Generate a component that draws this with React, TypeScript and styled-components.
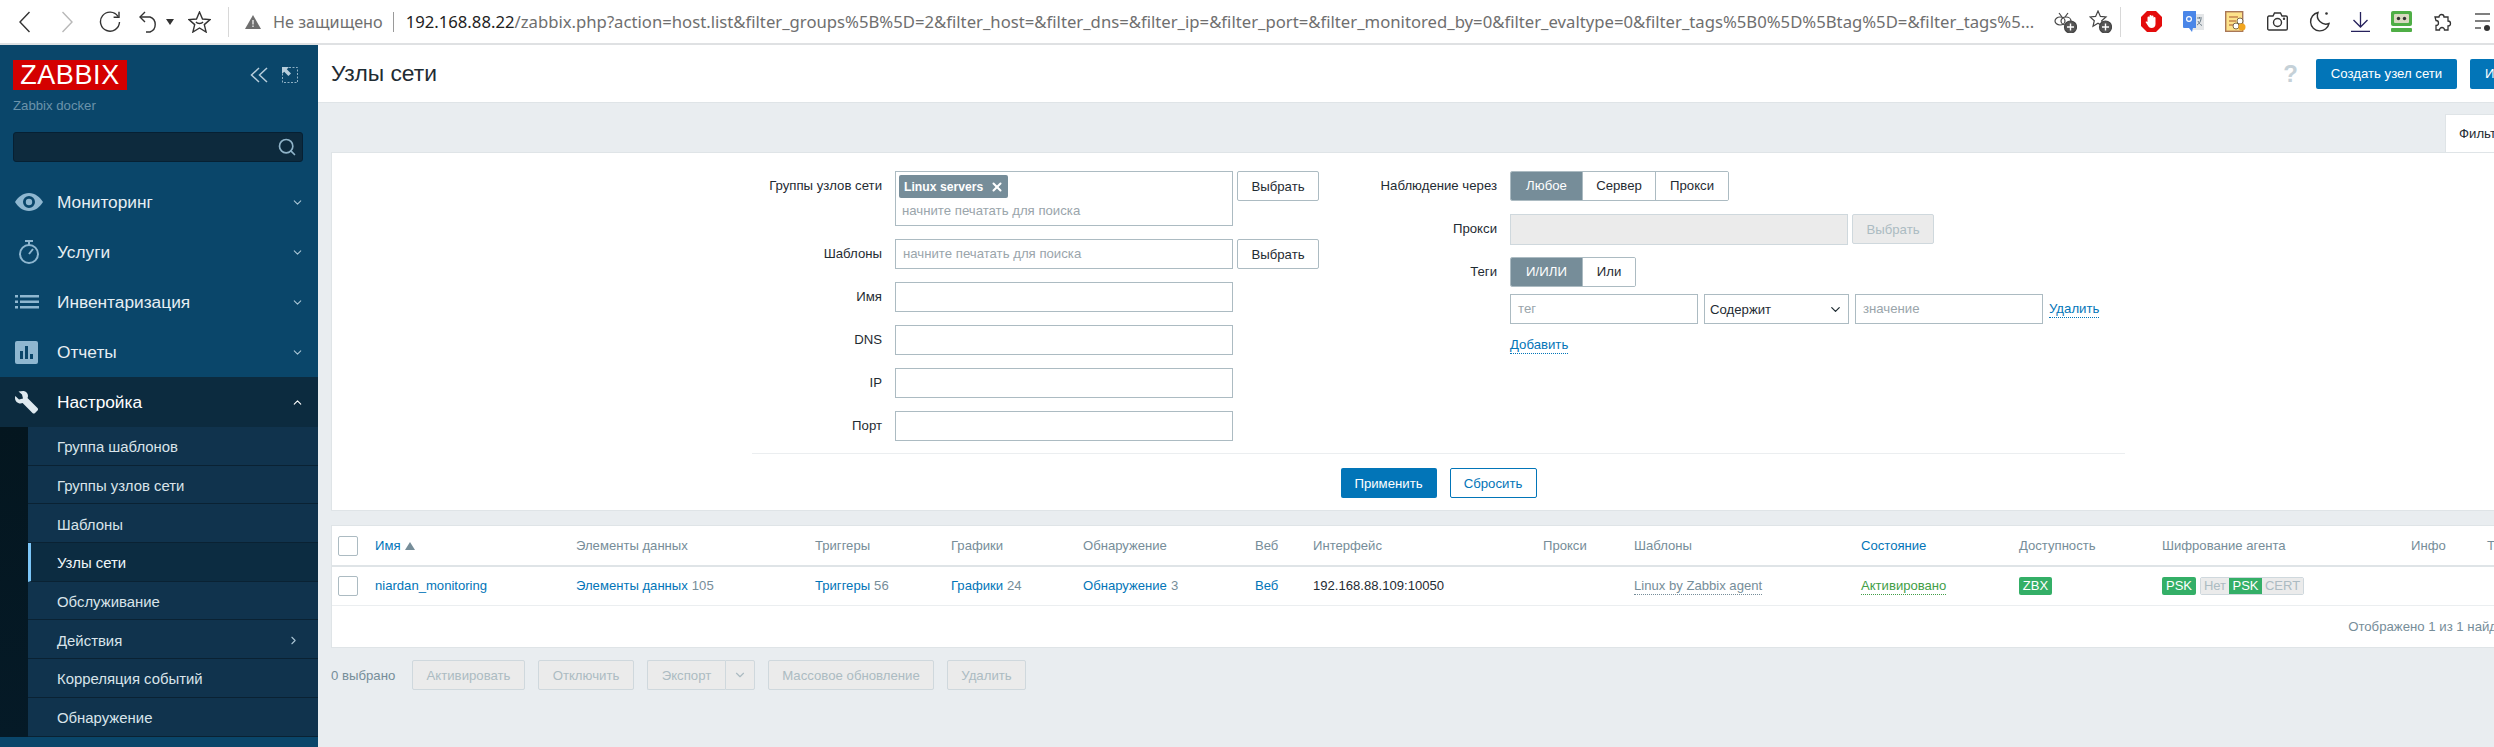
import React from 'react';
import styled, { createGlobalStyle } from 'styled-components';
import { ChevronDown, ChevronUp, ChevronRight, Search, X } from 'lucide-react';

const GlobalStyle = createGlobalStyle`
  html, body {
    margin: 0;
    padding: 0;
    height: 100%;
    overflow: hidden;
    background: #e9edf0;
  }
  * { box-sizing: border-box; }
  body {
    font-family: "Liberation Sans", Arial, sans-serif;
    font-size: 13.2px;
    color: #1f2c33;
  }
`;

const Page = styled.div`
  width: 2494px;
  height: 747px;
  overflow: hidden;
  display: flex;
  flex-direction: column;
`;

/* browser chrome */
const BrowserBar = styled.div`
  height: 45px;
  flex: none;
  display: flex;
  align-items: center;
  background: #fff;
  border-bottom: 2px solid #dfe1e3;
  padding-left: 19px;
`;

const ToolGroup = styled.div<{ $gap: number; $left?: number }>`
  display: flex;
  align-items: center;
  gap: ${p => p.$gap}px;
  flex: none;
  margin-left: ${p => p.$left ?? 0}px;
`;

const ToolSep = styled.div<{ $left: number; $right: number }>`
  width: 1px;
  height: 30px;
  background: #d8d8d8;
  flex: none;
  margin: 0 ${p => p.$right}px 0 ${p => p.$left}px;
`;

const Secure = styled.span`
  font-family: "Noto Sans", sans-serif;
  font-size: 16.2px;
  color: #6f6f6f;
  margin-left: 12px;
  white-space: nowrap;
`;

const PipeSep = styled.span`
  width: 1px;
  height: 20px;
  margin: 0 12px 0 10px;
  background: #9a9a9a;
  flex: none;
`;

const Address = styled.div`
  flex: none;
  width: 1634px;
  font-family: "Noto Sans", sans-serif;
  font-size: 16.7px;
  color: #6f6f6f;
  white-space: nowrap;
  overflow: hidden;
  b { font-weight: 400; color: #222; }
`;

const Body = styled.div`
  flex: 1;
  display: flex;
  min-height: 0;
`;

/* sidebar */
const Sidebar = styled.aside`
  width: 318px;
  flex: none;
  background: #0a466a;
  display: flex;
  flex-direction: column;
  padding-top: 15px;
`;

const BrandRow = styled.div`
  display: flex;
  align-items: flex-start;
  justify-content: space-between;
  padding: 0 20px 0 13px;
`;

const Logo = styled.div`
  width: 114px;
  height: 30px;
  background: #d40000;
  color: #fff;
  font-size: 27px;
  line-height: 30px;
  text-align: center;
  letter-spacing: 0.6px;
`;

const BrandTools = styled.div`
  display: flex;
  gap: 14px;
  padding-top: 7px;
`;

const ServerName = styled.div`
  margin: 7px 13px 17px;
  font-size: 13.2px;
  line-height: 18px;
  color: #6b93ab;
`;

const SearchBox = styled.div`
  margin: 0 15px 15px 13px;
  height: 30px;
  background: #0d2a3d;
  border: 1px solid #062033;
  border-radius: 3px;
  display: flex;
  align-items: center;
  justify-content: flex-end;
  padding-right: 5px;
  color: #8fb3c8;
`;

const MenuItem = styled.div<{ $open?: boolean }>`
  height: 50px;
  display: flex;
  align-items: center;
  padding-left: 15px;
  padding-right: 14px;
  background: ${p => (p.$open ? '#0c2b3f' : 'transparent')};
  color: ${p => (p.$open ? '#fff' : '#e6eef3')};
  font-size: 17.3px;
`;

const MenuIcon = styled.span`
  width: 42px;
  flex: none;
  display: flex;
  align-items: center;
`;

const MenuLabel = styled.span`
  flex: 1;
`;

const Arrow = styled.span`
  display: flex;
  color: #a9c4d4;
`;

const SubMenu = styled.div`
  padding-left: 28px;
  background: linear-gradient(#04161f, #051a27);
`;

const SubItem = styled.div<{ $active?: boolean }>`
  height: 38.7px;
  display: flex;
  align-items: center;
  justify-content: space-between;
  padding-left: ${p => (p.$active ? '26px' : '29px')};
  padding-right: 18px;
  padding-top: 3px;
  background: ${p => (p.$active ? '#0c2c41' : '#10334d')};
  border-left: ${p => (p.$active ? '3px solid #7cc6f8' : '0')};
  border-bottom: 1px solid #0a2233;
  color: ${p => (p.$active ? '#f1f6f9' : '#d9e4ea')};
  font-size: 14.9px;
`;

/* main */
const Main = styled.main`
  width: 2241px;
  flex: none;
  display: flex;
  flex-direction: column;
`;

const Header = styled.header`
  height: 58px;
  flex: none;
  background: #fff;
  border-bottom: 1px solid #dfe4e7;
  display: flex;
  align-items: center;
  padding: 0 0 0 13px;
`;

const Title = styled.h1`
  flex: 1;
  margin: 0;
  font-size: 22.8px;
  font-weight: 400;
  color: #1f2c33;
`;

const Help = styled.span`
  font-size: 24px;
  font-weight: 700;
  color: #c5d1d8;
  margin-right: 18px;
`;

const PrimaryButton = styled.button<{ $w: number }>`
  width: ${p => p.$w}px;
  height: 30px;
  border: 0;
  border-radius: 2px;
  background: #0275b8;
  color: #fff;
  font: inherit;
  white-space: nowrap;
  padding: 0;
`;

const HeaderButtons = styled.div`
  display: flex;
  gap: 13px;
  padding-right: 13px;
`;

const Content = styled.div`
  padding: 11px 13px 0;
`;

const Tabs = styled.div`
  display: flex;
  justify-content: flex-end;
`;

const Tab = styled.div`
  width: 101px;
  height: 38px;
  background: #fff;
  border: 1px solid #dfe4e7;
  border-bottom: 0;
  padding: 11px 0 0 13px;
  color: #1f2c33;
`;

const FilterPanel = styled.section`
  background: #fff;
  border: 1px solid #dfe4e7;
  height: 359px;
  padding-top: 18px;
`;

const FilterForm = styled.div`
  width: 1373px;
  margin: 0 auto;
`;

const FormColumns = styled.div`
  display: flex;
  height: 283px;
  border-bottom: 1px solid #ebeef0;
`;

const FormColumn = styled.div<{ $label: number; $w: number }>`
  width: ${p => p.$w}px;
  flex: none;
  display: grid;
  grid-template-columns: ${p => p.$label}px 1fr;
  column-gap: 13px;
  align-content: start;
`;

const FieldLabel = styled.label`
  text-align: right;
  line-height: 30px;
  white-space: nowrap;
  color: #1f2c33;
`;

const FieldRow = styled.div<{ $mb: number }>`
  display: flex;
  gap: 4px;
  align-items: flex-start;
  margin-bottom: ${p => p.$mb}px;
`;

const TextInput = styled.div<{ $w?: number; $disabled?: boolean }>`
  width: ${p => p.$w ?? 338}px;
  height: ${p => (p.$disabled ? 31 : 30)}px;
  flex: none;
  border: 1px solid ${p => (p.$disabled ? '#cfd8dd' : '#acbbc2')};
  background: ${p => (p.$disabled ? '#ebebeb' : '#fff')};
  padding-left: 7px;
  line-height: 28px;
  color: #9aa5ab;
  white-space: nowrap;
`;

const MultiSelect = styled.div`
  width: 338px;
  height: 55px;
  flex: none;
  border: 1px solid #acbbc2;
  padding: 3px 3px 0;
  color: #9aa5ab;
  line-height: 22px;
`;

const MultiHint = styled.div`
  padding: 2px 0 0 3px;
`;

const Chip = styled.span`
  display: inline-flex;
  align-items: center;
  height: 23px;
  gap: 7px;
  padding: 0 4px 0 5px;
  background: #768d99;
  border-radius: 2px;
  color: #fff;
  font-size: 12.2px;
  font-weight: 700;
`;

const GhostButton = styled.button<{ $w?: number }>`
  width: ${p => p.$w ?? 82}px;
  height: 30px;
  flex: none;
  background: #fff;
  border: 1px solid #acbbc2;
  border-radius: 2px;
  color: #1f2c33;
  font: inherit;
  padding: 0;
`;

const DisabledButton = styled.button<{ $w: number }>`
  width: ${p => p.$w}px;
  height: 30px;
  flex: none;
  background: #ebebeb;
  border: 1px solid #cfd8dd;
  border-radius: 2px;
  color: #acbbc2;
  font: inherit;
  padding: 0;
`;

const Segmented = styled.div`
  display: inline-flex;
  height: 30px;
  border: 1px solid #acbbc2;
  border-radius: 2px;
  overflow: hidden;
`;

const Segment = styled.div<{ $w: number; $on?: boolean }>`
  width: ${p => p.$w}px;
  line-height: 28px;
  text-align: center;
  background: ${p => (p.$on ? '#768d99' : '#fff')};
  color: ${p => (p.$on ? '#fff' : '#1f2c33')};
  & + & { border-left: 1px solid #acbbc2; }
`;

const TagRow = styled.div`
  display: flex;
  align-items: center;
  gap: 6px;
  margin-bottom: 12px;
`;

const SelectBox = styled.div`
  width: 145px;
  height: 30px;
  flex: none;
  border: 1px solid #acbbc2;
  display: flex;
  align-items: center;
  justify-content: space-between;
  padding: 0 5px;
  color: #1f2c33;
`;

const DottedLink = styled.span<{ $color?: string }>`
  display: inline-block;
  color: ${p => p.$color ?? '#0275b8'};
  border-bottom: 1px dotted ${p => p.$color ?? '#0275b8'};
  line-height: 17px;
  white-space: nowrap;
`;

const FormActions = styled.div`
  display: flex;
  justify-content: center;
  gap: 13px;
  padding-top: 14px;
`;

const ResetButton = styled(GhostButton)`
  border-color: #0275b8;
  color: #0275b8;
`;

const ListPanel = styled.section`
  margin-top: 14px;
  background: #fff;
  border: 1px solid #dfe4e7;
  height: 123px;
`;

const Table = styled.table`
  width: 100%;
  table-layout: fixed;
  border-collapse: collapse;
  white-space: nowrap;
  font-size: 13.1px;
`;

const Th = styled.th<{ $link?: boolean }>`
  height: 40px;
  padding: 0;
  text-align: left;
  font-weight: 400;
  color: ${p => (p.$link ? '#0275b8' : '#768d99')};
  border-bottom: 2px solid #dfe4e7;
`;

const Td = styled.td`
  height: 39px;
  padding: 0;
  border-bottom: 1px solid #ebeef0;
`;

const Check = styled.span`
  display: block;
  width: 20px;
  height: 20px;
  margin-left: 6px;
  border: 1px solid #acbbc2;
  border-radius: 2px;
`;

const SortMark = styled.span`
  display: inline-block;
  margin-left: 4px;
  border-left: 5px solid transparent;
  border-right: 5px solid transparent;
  border-bottom: 8px solid #768d99;
`;

const Link = styled.span`
  color: #0275b8;
`;

const Count = styled.span`
  color: #768d99;
  margin-left: 4px;
`;

const Badge = styled.span<{ $on?: boolean; $w: number }>`
  display: inline-block;
  width: ${p => p.$w}px;
  height: 18px;
  line-height: 18px;
  text-align: center;
  font-size: 13px;
  background: ${p => (p.$on ? '#34af67' : '#ebebeb')};
  color: ${p => (p.$on ? '#fff' : '#acbbc2')};
`;

const SoloBadge = styled(Badge)`
  border-radius: 2px;
`;

const BadgeGroup = styled.span`
  display: inline-flex;
  margin-left: 4px;
  border: 1px solid #cfd8dd;
  border-radius: 2px;
  overflow: hidden;
  vertical-align: top;
  span { height: 16px; line-height: 16px; }
`;

const Paging = styled.div`
  height: 41px;
  line-height: 41px;
  text-align: right;
  padding-right: 26px;
  color: #768d99;
`;

const ActionBar = styled.div`
  display: flex;
  align-items: center;
  gap: 13px;
  margin-top: 12px;
`;

const Selected = styled.span`
  width: 68px;
  color: #768d99;
`;

const SplitButton = styled.div`
  display: flex;
`;

const SplitLeft = styled(DisabledButton)`
  border-radius: 2px 0 0 2px;
  border-right: 0;
`;

const SplitRight = styled(DisabledButton)`
  border-radius: 0 2px 2px 0;
  display: flex;
  align-items: center;
  justify-content: center;
`;

const BackIcon = () => (
  <svg width="11" height="22" viewBox="0 0 11 22" fill="none" stroke="#333" strokeWidth="1.4"><path d="M10.5 1 1 11l9.5 10" /></svg>
);

const ForwardIcon = () => (
  <svg width="11" height="22" viewBox="0 0 11 22" fill="none" stroke="#b8b8b8" strokeWidth="1.4"><path d="M.5 1 10 11 .5 21" /></svg>
);

const ReloadIcon = () => (
  <svg width="22" height="22" viewBox="0 0 22 22" fill="none" stroke="#333" strokeWidth="1.4"><path d="M19 5.500A9.500 9.500 0 1 0 20.500 11" /><path d="M20 .8v5.400h-5.400" /></svg>
);

const UndoIcon = () => (
  <svg width="20" height="22" viewBox="0 0 20 22" fill="none" stroke="#333" strokeWidth="1.4"><path d="M6 1 1 6l5 5" /><path d="M1 6h10a8 8 0 0 1 0 15H7" /></svg>
);

const Caret = () => (
  <svg width="8" height="6" viewBox="0 0 8 6" fill="#333"><path d="M0 0h8L4 6z" /></svg>
);

const StarFace = () => (
  <svg width="23" height="22" viewBox="0 0 23 22" fill="none" stroke="#333" strokeWidth="1.4"><path d="m11.500 1 3 7 7.500.6-5.700 5 1.800 7.400-6.600-4-6.600 4 1.800-7.400-5.700-5 7.500-.6z" /><path d="M8 11c1.500 2 5.500 2 7 0" /></svg>
);

const WarnIcon = () => (
  <svg width="16" height="14" viewBox="0 0 16 14"><path d="M8 0 16 14H0z" fill="#6f6f6f" /><path d="M8 5v4.500M8 10.600v1.400" stroke="#fff" strokeWidth="1.2" /></svg>
);

const PlusDot = () => (
  <g>
    <circle cx="16.500" cy="17" r="6" fill="#555" />
    <path d="M16.500 13.500v7M13 17h7" stroke="#fff" strokeWidth="1.4" />
  </g>
);

const BugPlusIcon = () => (
  <svg width="23" height="23" viewBox="0 0 23 23" fill="none" stroke="#444" strokeWidth="1.2">
    <ellipse cx="6" cy="11" rx="5" ry="4" />
    <ellipse cx="12" cy="11" rx="5" ry="4" />
    <path d="M5 3l3 4M14 3l-3 4" />
    <PlusDot />
  </svg>
);

const StarPlusIcon = () => (
  <svg width="23" height="23" viewBox="0 0 23 23" fill="none" stroke="#444" strokeWidth="1.2">
    <path d="m9 1 2.400 5.400 5.600.5-4.300 3.800 1.300 5.600-5-3-5 3 1.300-5.600L1 6.900l5.600-.5z" />
    <PlusDot />
  </svg>
);

const AdBlockIcon = () => (
  <svg width="21" height="21" viewBox="0 0 21 21">
    <path d="M6 0h9l6 6v9l-6 6H6l-6-6V6z" fill="#e40c0c" />
    <path d="M6.500 11V6.500a1 1 0 0 1 2 0V5a1 1 0 0 1 2 0v.5a1 1 0 0 1 2 0V7a1 1 0 0 1 2 0v6c0 2.500-1.500 4-4 4-2 0-3-1-4-3l-2-3c1-.8 1.500-.5 2 0z" fill="#fff" />
  </svg>
);

const TranslateIcon = () => (
  <svg width="21" height="22" viewBox="0 0 21 22">
    <rect x="10" y="3" width="11" height="16" fill="#e4e6e8" />
    <path d="M14 7h5M16.500 6v1.500M18 8c-.5 3-2 5-4 6M15 10c.8 2 2 3.500 4 4.500" stroke="#6b7c88" fill="none" strokeWidth="1" />
    <path d="M1 0h12v17H10l-1 4-3-4H1a1 1 0 0 1-1-1V1a1 1 0 0 1 1-1z" fill="#4a86e8" />
    <circle cx="6" cy="8" r="2.400" fill="none" stroke="#fff" strokeWidth="1.200" />
  </svg>
);

const NotesIcon = () => (
  <svg width="21" height="21" viewBox="0 0 21 21" fill="none">
    <rect x=".7" y=".7" width="17" height="19.600" fill="#fde28a" stroke="#a97757" strokeWidth="1.400" />
    <path d="M4 6h9M4 10h7M4 14h5" stroke="#a9562c" strokeWidth="1.200" />
    <circle cx="15" cy="10" r="3" fill="#fff" stroke="#7a6a4a" />
    <circle cx="11" cy="15" r="3" fill="#fff" stroke="#7a6a4a" />
    <circle cx="17" cy="16" r="3.500" fill="#f2a51e" />
  </svg>
);

const CameraIcon = () => (
  <svg width="21" height="19" viewBox="0 0 21 19" fill="none" stroke="#333" strokeWidth="1.400">
    <path d="M2 4h4l1.500-3h6L15 4h4a1.300 1.300 0 0 1 1.300 1.300v11.400A1.300 1.300 0 0 1 19 18H2a1.300 1.300 0 0 1-1.300-1.300V5.300A1.300 1.300 0 0 1 2 4z" />
    <circle cx="10.500" cy="10.500" r="4" />
    <circle cx="17" cy="6.700" r=".5" fill="#333" />
  </svg>
);

const MoonIcon = () => (
  <svg width="21" height="21" viewBox="0 0 21 21" fill="none" stroke="#333" strokeWidth="1.400">
    <path d="M9 1.500a9.300 9.300 0 1 0 11 11A8.500 8.500 0 0 1 9 1.500z" />
    <circle cx="17.500" cy="2.500" r="1.300" fill="#333" stroke="none" />
  </svg>
);

const DownloadIcon = () => (
  <svg width="19" height="20" viewBox="0 0 19 20" fill="none" stroke="#26215c" strokeWidth="1.300">
    <path d="M9.500 0v14.500M2.500 8l7 7 7-7M0 19.300h19" />
  </svg>
);

const RoboIcon = () => (
  <svg width="21" height="21" viewBox="0 0 21 21">
    <rect width="21" height="15" rx="2" fill="#4fae46" />
    <rect x="3" y="3" width="15" height="9" rx="1" fill="#d9d9c0" />
    <circle cx="7.500" cy="7.500" r="1.700" fill="#333" />
    <circle cx="13.500" cy="7.500" r="1.700" fill="#333" />
    <rect y="17" width="21" height="4" rx="1" fill="#4fae46" />
  </svg>
);

const PuzzleIcon = () => (
  <svg width="21" height="21" viewBox="0 0 21 21" fill="none" stroke="#333" strokeWidth="1.300">
    <path d="M2 6h4a2.500 2.500 0 1 1 5 0h4v4a2.500 2.500 0 1 1 0 5v4h-3.500a2.500 2.500 0 1 0-5 0H3v-4.500a2.500 2.500 0 1 0 0-5z" />
  </svg>
);

const ListDotIcon = () => (
  <svg width="15" height="21" viewBox="0 0 15 21" fill="none" stroke="#555" strokeWidth="1.300">
    <path d="M0 3h15M0 10h15M0 17h6" />
    <circle cx="12" cy="17" r="3" fill="#333" stroke="none" />
  </svg>
);

const EyeIcon = () => (
  <svg width="28" height="20" viewBox="0 0 28 20">
    <path fillRule="evenodd" d="M14 1c6 0 11 4 14 9-3 5-8 9-14 9S3 15 0 10C3 5 8 1 14 1zm0 3a6 6 0 1 0 0 12 6 6 0 0 0 0-12zm0 2.800a3.200 3.200 0 1 1 0 6.400 3.200 3.200 0 0 1 0-6.400z" fill="#8fb7d0" />
  </svg>
);

const TimerIcon = () => (
  <svg width="28" height="24" viewBox="0 0 28 24" fill="none" stroke="#8fb7d0" strokeWidth="2">
    <circle cx="14" cy="14" r="9" />
    <path d="M10 1h8M14 1v4M14 14l4-5" />
  </svg>
);

const ListIcon = () => (
  <svg width="24" height="14" viewBox="0 0 24 14" fill="#8fb7d0">
    <rect width="3" height="2.500" /><rect x="5" width="19" height="2.500" />
    <rect y="5.500" width="3" height="2.500" /><rect x="5" y="5.500" width="19" height="2.500" />
    <rect y="11" width="3" height="2.500" /><rect x="5" y="11" width="19" height="2.500" />
  </svg>
);

const ChartIcon = () => (
  <svg width="23" height="23" viewBox="0 0 23 23">
    <rect width="23" height="23" rx="2" fill="#8fb7d0" />
    <path d="M5 10h3v8H5zM10 5h3v13h-3zM15 13h3v5h-3z" fill="#0a466a" />
  </svg>
);

const WrenchIcon = () => (
  <svg width="23" height="23" viewBox="0 0 23 23">
    <path d="M8 0c2.800 0 5 2.200 5 5 0 .8-.2 1.500-.5 2.100L22.500 17c.7.700.7 1.800 0 2.500l-2.500 2.500c-.7.700-1.800.7-2.500 0L7.600 12c-.6.300-1.300.5-2.100.5C2.500 12.500 0 10 0 7c0-.7.100-1.300.3-1.900L4 8.500l4-1-1-4-3.500-3C5 .2 6.500 0 8 0z" fill="#dfe9ef" />
  </svg>
);

const CollapseIcon = () => (
  <svg width="18" height="16" viewBox="0 0 18 16" fill="none" stroke="#b7cddb" strokeWidth="1.500"><path d="M9 1 1.500 8 9 15M17 1 9.500 8l7.500 7" /></svg>
);

const KioskIcon = () => (
  <svg width="16" height="16" viewBox="0 0 16 16" fill="none">
    <path d="M7 .5h8.500V15.500H.5V7" stroke="#8fb0c4" strokeDasharray="2 1.500" />
    <path d="M0 0h7L4.800 2.200 9 6.400 6.400 9 2.200 4.800 0 7z" fill="#b7cddb" />
  </svg>
);

const columns = [43, 201, 239, 136, 132, 172, 58, 230, 91, 227, 158, 143, 249, 76, 60];

const subItems = ['Группа шаблонов', 'Группы узлов сети', 'Шаблоны', 'Узлы сети', 'Обслуживание', 'Действия', 'Корреляция событий', 'Обнаружение'];

const App = () => {
  return (
    <Page>
      <GlobalStyle />
      <BrowserBar>
        <ToolGroup $gap={32}>
          <BackIcon />
          <ForwardIcon />
        </ToolGroup>
        <ToolGroup $gap={14} $left={26}>
          <ToolGroup $gap={18}>
            <ReloadIcon />
            <ToolGroup $gap={7}>
              <UndoIcon />
              <Caret />
            </ToolGroup>
          </ToolGroup>
          <StarFace />
        </ToolGroup>
        <ToolSep $left={17} $right={16} />
        <WarnIcon />
        <Secure>Не защищено</Secure>
        <PipeSep />
        <Address>
          <b>192.168.88.22</b>/zabbix.php?action=host.list&amp;filter_groups%5B%5D=2&amp;filter_host=&amp;filter_dns=&amp;filter_ip=&amp;filter_port=&amp;filter_monitored_by=0&amp;filter_evaltype=0&amp;filter_tags%5B0%5D%5Btag%5D=&amp;filter_tags%5...
        </Address>
        <ToolGroup $gap={12} $left={14}>
          <BugPlusIcon />
          <StarPlusIcon />
        </ToolGroup>
        <ToolSep $left={8} $right={20} />
        <ToolGroup $gap={21}>
          <AdBlockIcon />
          <TranslateIcon />
          <NotesIcon />
          <CameraIcon />
          <MoonIcon />
          <DownloadIcon />
          <RoboIcon />
          <PuzzleIcon />
          <ListDotIcon />
        </ToolGroup>
      </BrowserBar>
      <Body>
        <Sidebar>
          <BrandRow>
            <Logo>ZABBIX</Logo>
            <BrandTools>
              <CollapseIcon />
              <KioskIcon />
            </BrandTools>
          </BrandRow>
          <ServerName>Zabbix docker</ServerName>
          <SearchBox><Search size={20} strokeWidth={2} /></SearchBox>
          <MenuItem>
            <MenuIcon><EyeIcon /></MenuIcon>
            <MenuLabel>Мониторинг</MenuLabel>
            <Arrow><ChevronDown size={13} /></Arrow>
          </MenuItem>
          <MenuItem>
            <MenuIcon><TimerIcon /></MenuIcon>
            <MenuLabel>Услуги</MenuLabel>
            <Arrow><ChevronDown size={13} /></Arrow>
          </MenuItem>
          <MenuItem>
            <MenuIcon><ListIcon /></MenuIcon>
            <MenuLabel>Инвентаризация</MenuLabel>
            <Arrow><ChevronDown size={13} /></Arrow>
          </MenuItem>
          <MenuItem>
            <MenuIcon><ChartIcon /></MenuIcon>
            <MenuLabel>Отчеты</MenuLabel>
            <Arrow><ChevronDown size={13} /></Arrow>
          </MenuItem>
          <MenuItem $open>
            <MenuIcon><WrenchIcon /></MenuIcon>
            <MenuLabel>Настройка</MenuLabel>
            <Arrow><ChevronUp size={13} color="#fff" /></Arrow>
          </MenuItem>
          <SubMenu>
            {subItems.map(item => (
              <SubItem key={item} $active={item === 'Узлы сети'}>
                {item}
                {item === 'Действия' && <Arrow><ChevronRight size={13} /></Arrow>}
              </SubItem>
            ))}
          </SubMenu>
        </Sidebar>
        <Main>
          <Header>
            <Title>Узлы сети</Title>
            <Help>?</Help>
            <HeaderButtons>
              <PrimaryButton $w={141}>Создать узел сети</PrimaryButton>
              <PrimaryButton $w={76}>Импорт</PrimaryButton>
            </HeaderButtons>
          </Header>
          <Content>
            <Tabs><Tab>Фильтр</Tab></Tabs>
            <FilterPanel>
              <FilterForm>
                <FormColumns>
                  <FormColumn $label={130} $w={626}>
                    <FieldLabel>Группы узлов сети</FieldLabel>
                    <FieldRow $mb={13}>
                      <MultiSelect>
                        <Chip>Linux servers <X size={14} strokeWidth={3.5} /></Chip>
                        <MultiHint>начните печатать для поиска</MultiHint>
                      </MultiSelect>
                      <GhostButton>Выбрать</GhostButton>
                    </FieldRow>
                    <FieldLabel>Шаблоны</FieldLabel>
                    <FieldRow $mb={13}>
                      <TextInput>начните печатать для поиска</TextInput>
                      <GhostButton>Выбрать</GhostButton>
                    </FieldRow>
                    <FieldLabel>Имя</FieldLabel>
                    <FieldRow $mb={13}><TextInput /></FieldRow>
                    <FieldLabel>DNS</FieldLabel>
                    <FieldRow $mb={13}><TextInput /></FieldRow>
                    <FieldLabel>IP</FieldLabel>
                    <FieldRow $mb={13}><TextInput /></FieldRow>
                    <FieldLabel>Порт</FieldLabel>
                    <FieldRow $mb={0}><TextInput /></FieldRow>
                  </FormColumn>
                  <FormColumn $label={119} $w={747}>
                    <FieldLabel>Наблюдение через</FieldLabel>
                    <FieldRow $mb={13}>
                      <Segmented>
                        <Segment $w={71} $on>Любое</Segment>
                        <Segment $w={73}>Сервер</Segment>
                        <Segment $w={73}>Прокси</Segment>
                      </Segmented>
                    </FieldRow>
                    <FieldLabel>Прокси</FieldLabel>
                    <FieldRow $mb={12}>
                      <TextInput $w={338} $disabled />
                      <DisabledButton $w={82}>Выбрать</DisabledButton>
                    </FieldRow>
                    <FieldLabel>Теги</FieldLabel>
                    <div>
                      <FieldRow $mb={7}>
                        <Segmented>
                          <Segment $w={71} $on>И/ИЛИ</Segment>
                          <Segment $w={53}>Или</Segment>
                        </Segmented>
                      </FieldRow>
                      <TagRow>
                        <TextInput $w={188}>тег</TextInput>
                        <SelectBox>Содержит <ChevronDown size={15} /></SelectBox>
                        <TextInput $w={188}>значение</TextInput>
                        <DottedLink>Удалить</DottedLink>
                      </TagRow>
                      <DottedLink>Добавить</DottedLink>
                    </div>
                  </FormColumn>
                </FormColumns>
                <FormActions>
                  <PrimaryButton $w={96}>Применить</PrimaryButton>
                  <ResetButton $w={87}>Сбросить</ResetButton>
                </FormActions>
              </FilterForm>
            </FilterPanel>
            <ListPanel>
              <Table>
                <colgroup>
                  {columns.map((w, i) => <col key={i} width={w} />)}
                </colgroup>
                <thead>
                  <tr>
                    <Th><Check /></Th>
                    <Th $link>Имя<SortMark /></Th>
                    <Th>Элементы данных</Th>
                    <Th>Триггеры</Th>
                    <Th>Графики</Th>
                    <Th>Обнаружение</Th>
                    <Th>Веб</Th>
                    <Th>Интерфейс</Th>
                    <Th>Прокси</Th>
                    <Th>Шаблоны</Th>
                    <Th $link>Состояние</Th>
                    <Th>Доступность</Th>
                    <Th>Шифрование агента</Th>
                    <Th>Инфо</Th>
                    <Th>Теги</Th>
                  </tr>
                </thead>
                <tbody>
                  <tr>
                    <Td><Check /></Td>
                    <Td><Link>niardan_monitoring</Link></Td>
                    <Td><Link>Элементы данных</Link><Count>105</Count></Td>
                    <Td><Link>Триггеры</Link><Count>56</Count></Td>
                    <Td><Link>Графики</Link><Count>24</Count></Td>
                    <Td><Link>Обнаружение</Link><Count>3</Count></Td>
                    <Td><Link>Веб</Link></Td>
                    <Td>192.168.88.109:10050</Td>
                    <Td />
                    <Td><DottedLink $color="#768d99">Linux by Zabbix agent</DottedLink></Td>
                    <Td><DottedLink $color="#429e47">Активировано</DottedLink></Td>
                    <Td><SoloBadge $on $w={33}>ZBX</SoloBadge></Td>
                    <Td>
                      <SoloBadge $on $w={34}>PSK</SoloBadge>
                      <BadgeGroup>
                        <Badge $w={28}>Нет</Badge>
                        <Badge $on $w={33}>PSK</Badge>
                        <Badge $w={41}>CERT</Badge>
                      </BadgeGroup>
                    </Td>
                    <Td />
                    <Td />
                  </tr>
                </tbody>
              </Table>
              <Paging>Отображено 1 из 1 найдено</Paging>
            </ListPanel>
            <ActionBar>
              <Selected>0 выбрано</Selected>
              <DisabledButton $w={113}>Активировать</DisabledButton>
              <DisabledButton $w={96}>Отключить</DisabledButton>
              <SplitButton>
                <SplitLeft $w={78}>Экспорт</SplitLeft>
                <SplitRight $w={30}><ChevronDown size={14} /></SplitRight>
              </SplitButton>
              <DisabledButton $w={166}>Массовое обновление</DisabledButton>
              <DisabledButton $w={79}>Удалить</DisabledButton>
            </ActionBar>
          </Content>
        </Main>
      </Body>
    </Page>
  );
};

export default App;
